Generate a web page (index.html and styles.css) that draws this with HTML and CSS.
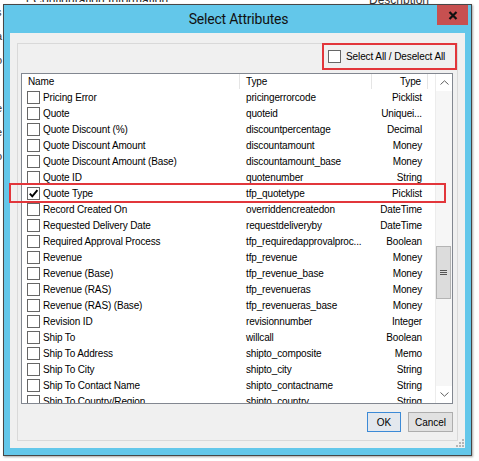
FILE: index.html
```html
<!DOCTYPE html>
<html>
<head>
<meta charset="utf-8">
<link rel="stylesheet" href="styles.css">
</head>
<body>
<div class="desktop">
  <div class="bg-top">
    <span class="bg-title">r Configuration Information</span>
    <span class="bg-desc">Description</span>
  </div>
  <div class="bg-left">
    <span>s</span><span>a</span><span>o</span><span>t</span><span>e</span><span>e</span><span>o</span><span>i</span>
  </div>
</div>

<div class="dialog">
  <div class="titlebar">
    <span class="title">Select Attributes</span>
    <div class="close">
      <svg width="10" height="9" viewBox="0 0 10 9"><path d="M1.5 1 L8.5 8 M8.5 1 L1.5 8" stroke="#111" stroke-width="2.2" fill="none"/></svg>
    </div>
  </div>
  <div class="client">
    <div class="panel">
      <div class="toprow">
        <div class="selectall">
          <span class="cb"></span>
          <span class="label">Select All / Deselect All</span>
        </div>
      </div>
      <div class="list">
        <div class="list-main">
          <div class="header">
            <div class="hc c-name">Name</div>
            <div class="hc c-type">Type</div>
            <div class="hc c-kind">Type</div>
            <div class="hc c-rest"></div>
          </div>
          <div class="rows">
            <div class="row"><div class="c-name"><span class="cb"></span>Pricing Error</div><div class="c-type">pricingerrorcode</div><div class="c-kind">Picklist</div></div>
            <div class="row"><div class="c-name"><span class="cb"></span>Quote</div><div class="c-type">quoteid</div><div class="c-kind">Uniquei...</div></div>
            <div class="row"><div class="c-name"><span class="cb"></span>Quote Discount (%)</div><div class="c-type">discountpercentage</div><div class="c-kind">Decimal</div></div>
            <div class="row"><div class="c-name"><span class="cb"></span>Quote Discount Amount</div><div class="c-type">discountamount</div><div class="c-kind">Money</div></div>
            <div class="row"><div class="c-name"><span class="cb"></span>Quote Discount Amount (Base)</div><div class="c-type">discountamount_base</div><div class="c-kind">Money</div></div>
            <div class="row"><div class="c-name"><span class="cb"></span>Quote ID</div><div class="c-type">quotenumber</div><div class="c-kind">String</div></div>
            <div class="row"><div class="c-name"><span class="cb checked"><svg width="11" height="11" viewBox="0 0 11 11"><path d="M1.8 5.6 L4.3 8.4 L9.4 2.2" stroke="#000" stroke-width="1.9" fill="none"/></svg></span>Quote Type</div><div class="c-type">tfp_quotetype</div><div class="c-kind">Picklist</div></div>
            <div class="row"><div class="c-name"><span class="cb"></span>Record Created On</div><div class="c-type">overriddencreatedon</div><div class="c-kind">DateTime</div></div>
            <div class="row"><div class="c-name"><span class="cb"></span>Requested Delivery Date</div><div class="c-type">requestdeliveryby</div><div class="c-kind">DateTime</div></div>
            <div class="row"><div class="c-name"><span class="cb"></span>Required Approval Process</div><div class="c-type">tfp_requiredapprovalproc...</div><div class="c-kind">Boolean</div></div>
            <div class="row"><div class="c-name"><span class="cb"></span>Revenue</div><div class="c-type">tfp_revenue</div><div class="c-kind">Money</div></div>
            <div class="row"><div class="c-name"><span class="cb"></span>Revenue (Base)</div><div class="c-type">tfp_revenue_base</div><div class="c-kind">Money</div></div>
            <div class="row"><div class="c-name"><span class="cb"></span>Revenue (RAS)</div><div class="c-type">tfp_revenueras</div><div class="c-kind">Money</div></div>
            <div class="row"><div class="c-name"><span class="cb"></span>Revenue (RAS) (Base)</div><div class="c-type">tfp_revenueras_base</div><div class="c-kind">Money</div></div>
            <div class="row"><div class="c-name"><span class="cb"></span>Revision ID</div><div class="c-type">revisionnumber</div><div class="c-kind">Integer</div></div>
            <div class="row"><div class="c-name"><span class="cb"></span>Ship To</div><div class="c-type">willcall</div><div class="c-kind">Boolean</div></div>
            <div class="row"><div class="c-name"><span class="cb"></span>Ship To Address</div><div class="c-type">shipto_composite</div><div class="c-kind">Memo</div></div>
            <div class="row"><div class="c-name"><span class="cb"></span>Ship To City</div><div class="c-type">shipto_city</div><div class="c-kind">String</div></div>
            <div class="row"><div class="c-name"><span class="cb"></span>Ship To Contact Name</div><div class="c-type">shipto_contactname</div><div class="c-kind">String</div></div>
            <div class="row"><div class="c-name"><span class="cb"></span>Ship To Country/Region</div><div class="c-type">shipto_country</div><div class="c-kind">String</div></div>
          </div>
        </div>
        <div class="scrollbar">
          <div class="sb-btn"><svg width="9" height="5" viewBox="0 0 9 5"><path d="M0.5 4.5 L4.5 0.8 L8.5 4.5" stroke="#606060" stroke-width="1" fill="none"/></svg></div>
          <div class="sb-track">
            <div class="thumb">
              <svg width="7" height="5" viewBox="0 0 7 5"><path d="M0 0.5 H7 M0 2.5 H7 M0 4.5 H7" stroke="#555" stroke-width="1"/></svg>
            </div>
          </div>
          <div class="sb-btn"><svg width="9" height="5" viewBox="0 0 9 5"><path d="M0.5 0.5 L4.5 4.2 L8.5 0.5" stroke="#606060" stroke-width="1" fill="none"/></svg></div>
        </div>
      </div>
      <div class="buttons">
        <div class="btn default">OK</div>
        <div class="btn cancel">Cancel</div>
      </div>
    </div>
    <svg class="grip" width="8" height="8" viewBox="0 0 8 8"><g fill="#b5b5b5"><rect x="6" y="0" width="2" height="2"/><rect x="3" y="3" width="2" height="2"/><rect x="6" y="3" width="2" height="2"/><rect x="0" y="6" width="2" height="2"/><rect x="3" y="6" width="2" height="2"/><rect x="6" y="6" width="2" height="2"/></g></svg>
  </div>
</div>

<div class="mark mark-row"></div>
</body>
</html>
```

FILE: styles.css
```css
html, body {
  margin: 0;
  padding: 0;
}
body {
  width: 479px;
  height: 461px;
  overflow: hidden;
  background: #ffffff;
  position: relative;
  font-family: "Liberation Sans", Arial, sans-serif;
  font-size: 10px;
  color: #000;
}

/* background window behind dialog */
.desktop {
  width: 479px;
  height: 461px;
  display: flow-root;
  overflow: hidden;
}
.bg-top {
  display: flex;
  height: 8px;
  margin-top: -6px;
  font-size: 12px;
  line-height: 12px;
  white-space: nowrap;
}
.bg-title {
  width: 369px;
  padding-left: 26px;
  box-sizing: border-box;
  flex-shrink: 0;
  overflow: hidden;
  color: #222;
}
.bg-desc {
  color: #333;
}
.bg-left {
  display: flex;
  flex-direction: column;
  gap: 12px;
  margin-left: -4px;
  margin-top: 4px;
  font-size: 11px;
  line-height: 12px;
  color: #333;
}

/* dialog window */
.dialog {
  position: absolute;
  left: 3px;
  top: 4px;
  width: 469px;
  height: 452px;
  box-sizing: border-box;
  border: 1px solid #474747;
  background: #63c7ea;
  display: flex;
  flex-direction: column;
  box-shadow: 1px 1px 2px rgba(0,0,0,0.35);
}
.titlebar {
  height: 28px;
  position: relative;
  display: flex;
  align-items: center;
  justify-content: center;
}
.title {
  font-family: Roboto, "Liberation Sans", sans-serif;
  font-size: 14px;
  letter-spacing: -0.2px;
  color: #111;
  margin-left: 2px;
  margin-top: -1px;
}
.close {
  position: absolute;
  right: 3px;
  top: 0;
  width: 31px;
  height: 20px;
  background: #c75050;
  display: flex;
  align-items: center;
  justify-content: center;
}
.client {
  flex: 1;
  margin: 0 6px 7px 6px;
  background: #f0f0f0;
  padding: 10px 7px 7px 7px;
  display: flex;
  position: relative;
}
.grip {
  position: absolute;
  right: 1px;
  bottom: 1px;
}
.panel {
  flex: 1;
  border: 1px solid #d9d9d9;
  display: flex;
  flex-direction: column;
}
.toprow {
  height: 29px;
  display: flex;
  justify-content: flex-end;
}
.selectall {
  margin-top: -1px;
  width: 135px;
  height: 27px;
  box-sizing: border-box;
  border: 2px solid #e2363b;
  display: flex;
  align-items: center;
  padding-left: 4px;
  letter-spacing: -0.1px;
}
.selectall .cb {
  margin-right: 5px;
}
.cb {
  width: 13px;
  height: 13px;
  box-sizing: border-box;
  border: 1px solid #666666;
  background: #fff;
  display: inline-flex;
  align-items: center;
  justify-content: center;
  flex-shrink: 0;
}

/* list view */
.list {
  margin: 0 4px 0 3px;
  height: 331px;
  box-sizing: border-box;
  border: 1px solid #828790;
  background: #fff;
  display: flex;
}
.list-main {
  flex: 1;
  display: flex;
  flex-direction: column;
  overflow: hidden;
}
.header {
  height: 15px;
  display: flex;
  flex-shrink: 0;
}
.hc {
  box-sizing: border-box;
  border-right: 1px solid #e5e5e5;
  line-height: 15px;
  letter-spacing: -0.15px;
}
.c-name { width: 218px; box-sizing: border-box; flex-shrink: 0; }
.c-type { width: 132px; box-sizing: border-box; flex-shrink: 0; }
.c-kind { width: 56px; box-sizing: border-box; flex-shrink: 0; text-align: right; }
.c-rest { flex: 1; border-right: none; }
.hc.c-name { padding-left: 6px; }
.hc.c-type { padding-left: 6px; }
.hc.c-kind { padding-right: 6px; }

.rows {
  flex: 1;
  overflow: hidden;
}
.row {
  height: 16px;
  display: flex;
  align-items: center;
  letter-spacing: -0.15px;
  white-space: nowrap;
}
.row .c-name {
  display: flex;
  align-items: center;
  padding-left: 5px;
}
.row .c-name .cb {
  margin-right: 3px;
}
.row .c-type { padding-left: 6px; }
.row .c-kind { padding-right: 6px; }

.scrollbar {
  width: 17px;
  display: flex;
  flex-direction: column;
  background: #f0f0f0;
  border-left: 1px solid #ececec;
  box-sizing: border-box;
}
.sb-btn {
  height: 17px;
  display: flex;
  align-items: center;
  justify-content: center;
  background: #fff;
  flex-shrink: 0;
}
.sb-track {
  flex: 1;
  background: #f6f6f6;
  padding-top: 155px;
}
.thumb {
  height: 53px;
  margin: 0 1px 0 0;
  box-sizing: border-box;
  border: 1px solid #b4b4b4;
  background: #dcdcdc;
  display: flex;
  align-items: center;
  justify-content: center;
}

/* buttons */
.buttons {
  display: flex;
  justify-content: flex-end;
  gap: 7px;
  margin: 8px 4px 0 0;
}
.btn {
  height: 20px;
  box-sizing: border-box;
  background: #e1e1e1;
  border: 1px solid #adadad;
  display: flex;
  align-items: center;
  justify-content: center;
}
.btn.default {
  width: 34px;
  border-color: #3c8ad6;
  background: #e3e8ee;
}
.btn.cancel {
  width: 45px;
}

/* annotation box over the highlighted row */
.mark {
  position: absolute;
  box-sizing: border-box;
  border: 2px solid #e2363b;
}
.mark-row {
  left: 9px;
  top: 183px;
  width: 437px;
  height: 20px;
}
```
